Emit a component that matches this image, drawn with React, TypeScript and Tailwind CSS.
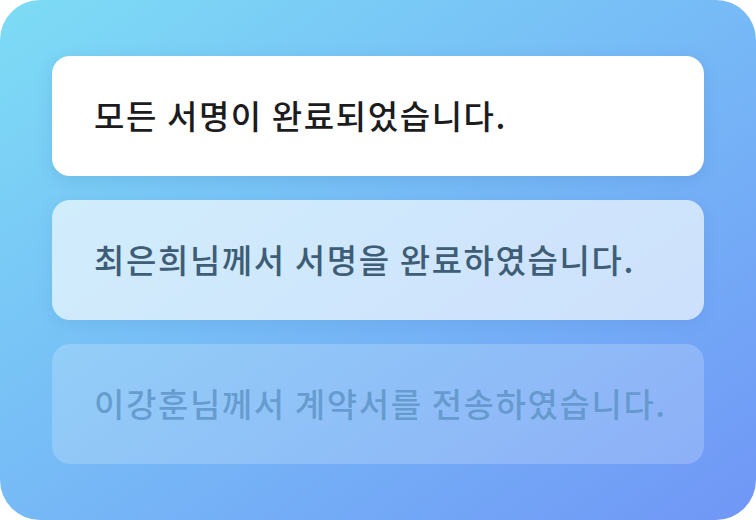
export default function App() {
  const font = { fontFamily: '"Noto Sans CJK KR", "Noto Sans", sans-serif' };
  return (
    <div className="w-[756px] h-[520px] bg-white">
      <div
        className="w-[756px] h-[520px] rounded-[40px] bg-gradient-to-br from-[#7ddcf5] to-[#7096f6] px-[52px] pt-[56px] flex flex-col gap-[24px]"
        style={font}
      >
        <div className="h-[120px] rounded-[18px] bg-white shadow-[0_4px_16px_rgba(40,90,160,0.15)] flex items-center pl-[42px]">
          <span className="text-[33px] font-medium text-[#1c1c1e] tracking-[1.6px]">모든 서명이 완료되었습니다.</span>
        </div>
        <div className="h-[120px] rounded-[18px] bg-white/65 shadow-[0_4px_16px_rgba(40,90,160,0.10)] flex items-center pl-[42px]">
          <span className="text-[33px] font-medium text-[#3e5d76] tracking-[1.6px]">최은희님께서 서명을 완료하였습니다.</span>
        </div>
        <div className="h-[120px] rounded-[18px] bg-white/20 flex items-center pl-[42px]">
          <span className="text-[33px] font-medium text-[#5f95c8]/85 tracking-[1.6px]">이강훈님께서 계약서를 전송하였습니다.</span>
        </div>
      </div>
    </div>
  );
}
